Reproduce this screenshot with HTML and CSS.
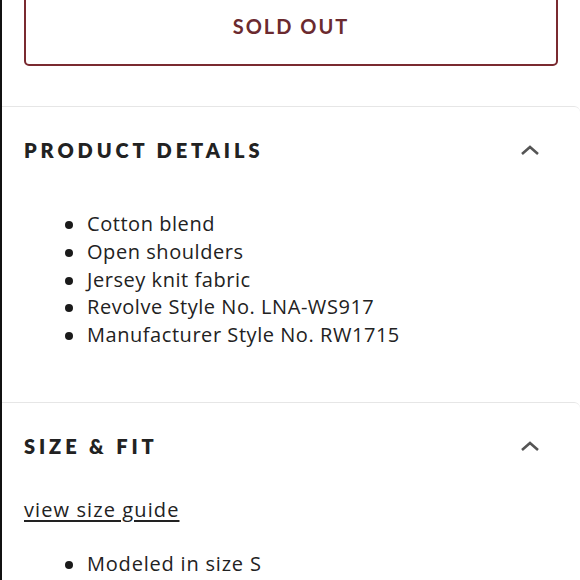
FILE: index.html
```html
<!DOCTYPE html>
<html>
<head>
<meta charset="utf-8">
<link rel="stylesheet" href="styles.css">
</head>
<body>
<div class="page">
  <div class="btn-wrap">
    <div class="sold-out">SOLD OUT</div>
  </div>
  <section class="section">
    <div class="sec-head">
      <h2 class="sec-title">PRODUCT DETAILS</h2>
      <svg class="chev" width="20" height="12" viewBox="0 0 20 12"><path d="M2 10 L10 3 L18 10" fill="none" stroke="#555" stroke-width="2.6"/></svg>
    </div>
    <ul class="details">
      <li>Cotton blend</li>
      <li>Open shoulders</li>
      <li>Jersey knit fabric</li>
      <li>Revolve Style No. LNA-WS917</li>
      <li>Manufacturer Style No. RW1715</li>
    </ul>
  </section>
  <section class="section section-fit">
    <div class="sec-head">
      <h2 class="sec-title">SIZE &amp; FIT</h2>
      <svg class="chev" width="20" height="12" viewBox="0 0 20 12"><path d="M2 10 L10 3 L18 10" fill="none" stroke="#555" stroke-width="2.6"/></svg>
    </div>
    <a class="guide">view size guide</a>
    <ul class="fit">
      <li>Modeled in size S</li>
    </ul>
  </section>
</div>
</body>
</html>
```
FILE: styles.css
```css
html, body { margin: 0; padding: 0; background: #fff; }
.page {
  height: 580px;
  overflow: hidden;
  border-left: 2px solid #111;
  box-sizing: border-box;
  font-family: "Lato", "Open Sans", sans-serif;
  color: #222;
}
.btn-wrap { padding: 0 22px 0 22px; margin-top: -20px; }
.sold-out {
  height: 86px;
  border: 2px solid #7a2a30;
  border-radius: 5px;
  display: flex;
  align-items: center;
  justify-content: center;
  padding-top: 6px;
  box-sizing: border-box;
  font-weight: 700;
  font-size: 20px;
  letter-spacing: 2px;
  color: #6b2a2f;
}
.section {
  border-top: 1px solid #e6e6e6;
  border-top-right-radius: 6px;
  margin-top: 40px;
}
.sec-head {
  display: flex;
  justify-content: space-between;
  align-items: center;
  padding: 32px 40px 0 22px;
  height: 22px;
}
.sec-title {
  margin: 0;
  font-size: 20px;
  font-weight: 800;
  letter-spacing: 3.9px;
  color: #222;
}
.chev { display: block; }
.details, .fit, .guide {
  font-family: "Open Sans", "Lato", sans-serif;
  font-size: 20px;
  letter-spacing: 0.55px;
  color: #222;
}
.details, .fit {
  list-style: none;
  margin: 0;
  padding-left: 85px;
  line-height: 27.8px;
}
.details { margin-top: 49px; }
.details li, .fit li { position: relative; }
.details li::before, .fit li::before {
  content: "";
  position: absolute;
  left: -22px;
  top: 11px;
  width: 8px;
  height: 8px;
  border-radius: 50%;
  background: #1a1a1a;
}
.section-fit { margin-top: 53px; }
.sec-head-fit { padding-top: 33px; }
.guide {
  display: inline-block;
  margin: 39px 0 0 22px;
  letter-spacing: 1.1px;
  text-decoration: underline;
  text-underline-offset: 3px;
}
.fit { margin-top: 27px; }
.fit li { letter-spacing: 0.8px; }
```
